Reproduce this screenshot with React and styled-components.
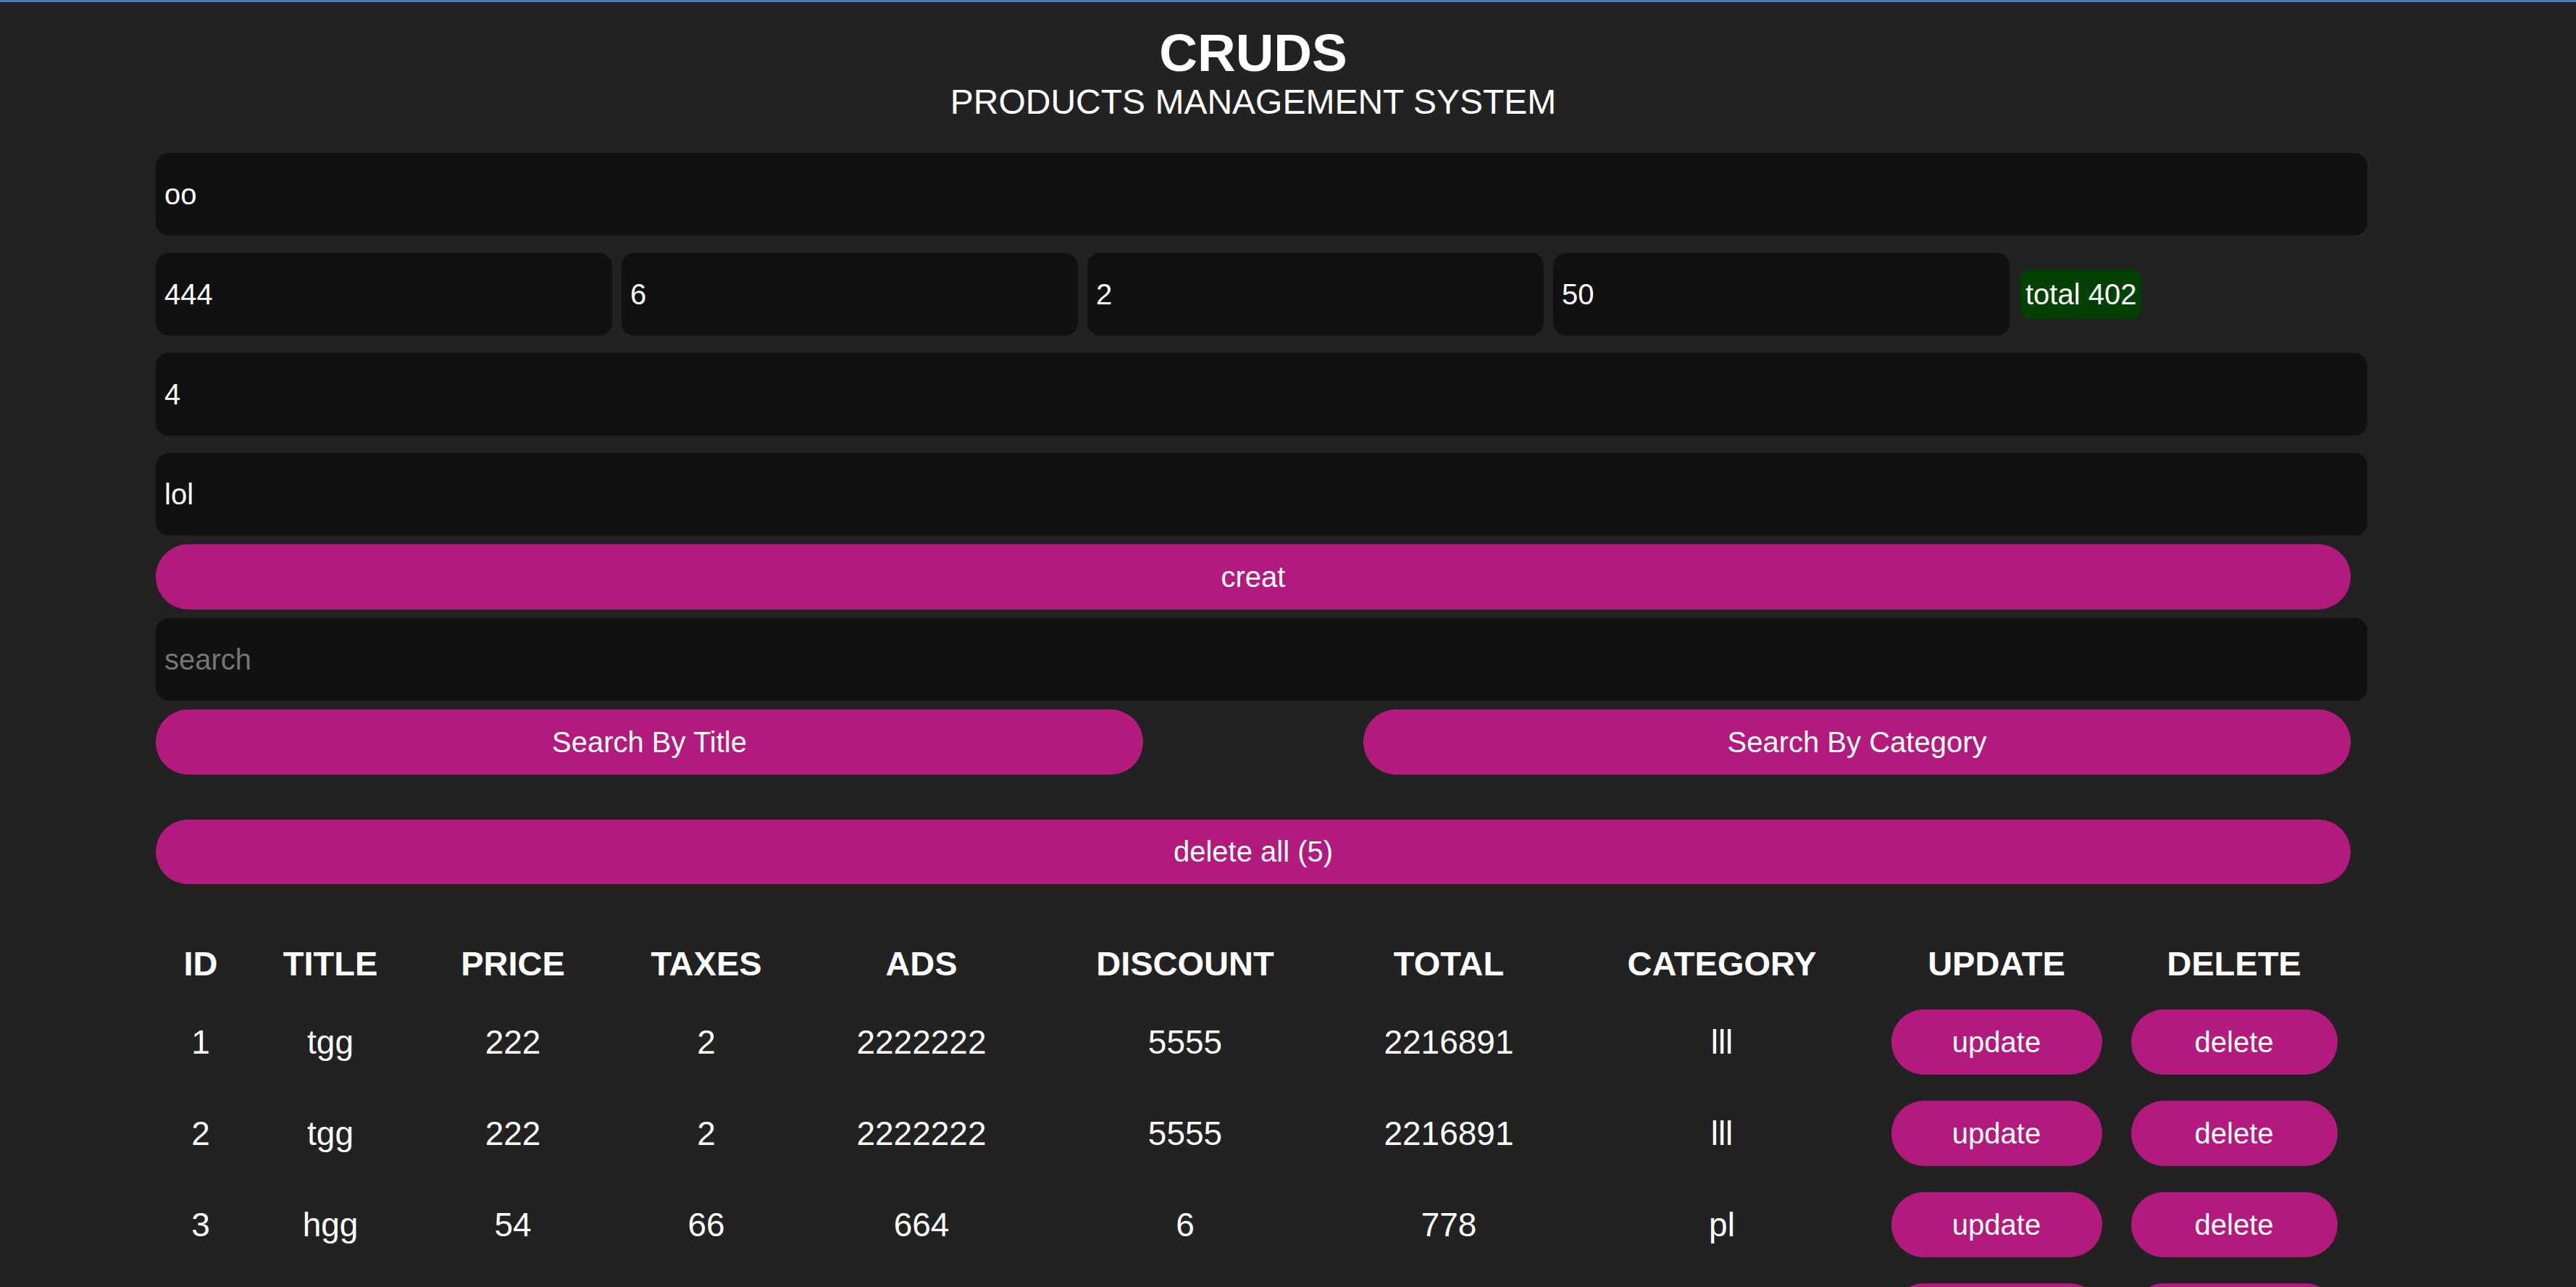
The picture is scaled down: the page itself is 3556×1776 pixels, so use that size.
import React from 'react';
import styled, { createGlobalStyle } from 'styled-components';

const GlobalStyle = createGlobalStyle`
    html, body {
        margin: 0;
        padding: 0;
        background: #222;
        color: #fff;
        font-family: "Liberation Sans", Arial, sans-serif;
        overflow: hidden;
    }
    * {
        box-sizing: border-box;
    }
`;

const products = [
    { id: 1, title: 'tgg', price: 222, taxes: 2, ads: 2222222, discount: 5555, total: 2216891, category: 'lll' },
    { id: 2, title: 'tgg', price: 222, taxes: 2, ads: 2222222, discount: 5555, total: 2216891, category: 'lll' },
    { id: 3, title: 'hgg', price: 54, taxes: 66, ads: 664, discount: 6, total: 778, category: 'pl' },
    { id: 4, title: 'oo', price: 444, taxes: 6, ads: 2, discount: 50, total: 402, category: 'lol' },
    { id: 5, title: 'oo', price: 444, taxes: 6, ads: 2, discount: 50, total: 402, category: 'lol' },
];

const columns = [
    ['id', 124], ['title', 234], ['price', 270], ['taxes', 264], ['ads', 330],
    ['discount', 398], ['total', 330], ['category', 424], ['update', 334], ['delete', 322],
];

const App = () => {
    return (
        <>
            <GlobalStyle />
            <TopBar />
            <Crud>
                <Head>
                    <Title>CRUDS</Title>
                    <Subtitle>PRODUCTS MANAGEMENT SYSTEM</Subtitle>
                </Head>

                <Inputs>
                    <Field defaultValue="oo" />
                    <PriceRow>
                        <Field $width="630px" defaultValue="444" />
                        <Field $width="630px" defaultValue="6" />
                        <Field $width="630px" defaultValue="2" />
                        <Field $width="630px" defaultValue="50" />
                        <Total>total 402</Total>
                    </PriceRow>
                    <Field defaultValue="4" />
                    <Field defaultValue="lol" />
                </Inputs>

                <Pill $mt="12px">creat</Pill>
                <Field $mt="12px" placeholder="search" />

                <SearchButtons>
                    <Pill $width="1363px">Search By Title</Pill>
                    <Pill $width="1363px">Search By Category</Pill>
                </SearchButtons>

                <Pill $mt="62px" $height="89px">delete all (5)</Pill>

                <Table>
                    <colgroup>
                        {columns.map(([name, w]) => <Col key={name} $w={w} />)}
                    </colgroup>
                    <thead>
                        <tr>
                            {columns.map(([name]) => <Th key={name}>{name}</Th>)}
                        </tr>
                    </thead>
                    <tbody>
                        {products.map((p) => (
                            <tr key={p.id}>
                                <Td>{p.id}</Td>
                                <Td>{p.title}</Td>
                                <Td>{p.price}</Td>
                                <Td>{p.taxes}</Td>
                                <Td>{p.ads}</Td>
                                <Td>{p.discount}</Td>
                                <Td>{p.total}</Td>
                                <Td>{p.category}</Td>
                                <Td><RowButton $width="291px">update</RowButton></Td>
                                <Td><RowButton $width="285px">delete</RowButton></Td>
                            </tr>
                        ))}
                    </tbody>
                </Table>
            </Crud>
        </>
    );
};

export default App;

const TopBar = styled.div`
    height: 3px;
    background: #4a78b0;
`;

const Crud = styled.div`
    width: 3030px;
    margin-left: 215px;
`;

const Head = styled.div`
    text-align: center;
    text-transform: uppercase;
    padding-top: 33px;
`;

const Title = styled.h1`
    margin: 0;
    font-size: 73px;
    line-height: 1;
    font-weight: 700;
`;

const Subtitle = styled.h3`
    margin: 8px 0 0;
    font-size: 48px;
    line-height: 1;
    font-weight: 400;
`;

const Inputs = styled.div`
    margin-top: 46px;
    display: flex;
    flex-direction: column;
    gap: 24px;
`;

const PriceRow = styled.div`
    display: flex;
    align-items: center;
    gap: 13px;
`;

const Field = styled.input`
    display: block;
    width: ${(p) => p.$width || '3053px'};
    height: 114px;
    margin-top: ${(p) => p.$mt || '0'};
    padding: 0 12px;
    border: none;
    outline: none;
    border-radius: 18px;
    background: #111;
    color: #fff;
    font-family: "Liberation Sans", Arial, sans-serif;
    font-size: 40px;

    &::placeholder {
        color: #757575;
    }
`;

const Total = styled.span`
    margin-left: 2px;
    padding: 12px 7px;
    border-radius: 14px;
    background: #034103;
    font-size: 40px;
    line-height: 44px;
`;

const Pill = styled.button`
    display: block;
    width: ${(p) => p.$width || '100%'};
    height: ${(p) => p.$height || '90px'};
    margin: ${(p) => p.$mt || '0'} 0 0;
    border: none;
    border-radius: 45px;
    background: #b21a7e;
    color: #fff;
    font-family: "Liberation Sans", Arial, sans-serif;
    font-size: 40px;
    cursor: pointer;
`;

const RowButton = styled(Pill)`
    display: inline-block;
    vertical-align: middle;
    margin: 0;
`;

const SearchButtons = styled.div`
    display: flex;
    justify-content: space-between;
    margin-top: 12px;
`;

const Table = styled.table`
    width: 3030px;
    margin-top: 63px;
    table-layout: fixed;
    border-collapse: collapse;
    text-align: center;
`;

const Col = styled.col`
    width: ${(p) => p.$w}px;
`;

const Th = styled.th`
    height: 92px;
    padding: 0;
    font-size: 47px;
    font-weight: 700;
    text-transform: uppercase;
    vertical-align: middle;
`;

const Td = styled.td`
    height: 126px;
    padding: 0;
    font-size: 46px;
    vertical-align: middle;
`;
